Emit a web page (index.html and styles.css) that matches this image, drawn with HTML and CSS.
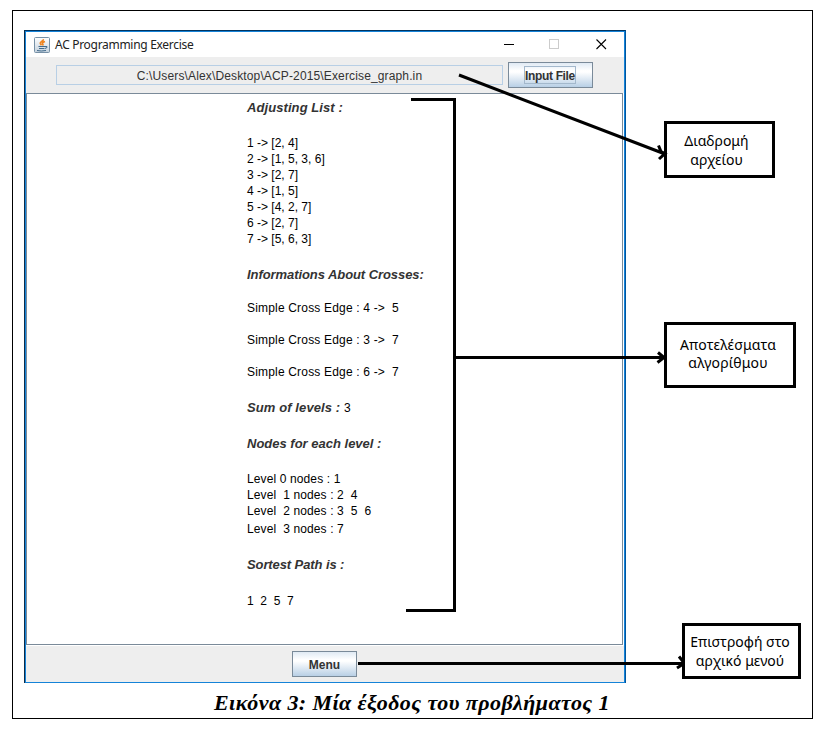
FILE: index.html
```html
<!DOCTYPE html>
<html lang="el">
<head>
<meta charset="utf-8">
<title>AC Programming Exercise</title>
<link rel="stylesheet" href="styles.css">
</head>
<body>
<figure class="figure">
  <section class="window">
    <header class="titlebar">
      <svg class="java" viewBox="0 0 16 16" width="16" height="16">
        <defs><linearGradient id="jb" x1="0" y1="0" x2="0" y2="1"><stop offset="0" stop-color="#fff"/><stop offset="1" stop-color="#c3d1dd"/></linearGradient></defs>
        <rect x=".5" y=".5" width="15" height="15" rx="1" fill="url(#jb)" stroke="#7690a6"/>
        <path d="M9.300 2.200C9.800 4.200 5.800 4.800 6.300 6.300Q6.800 7.300 7.500 8.300M11 4.500Q8 5.500 8.500 6.500Q9.500 7.500 8.500 8.500" fill="none" stroke="#ee8420" stroke-width="1.700"/>
        <path d="M4.500 9.500H11M5 11.500H10.500M3 13.500Q7 14.500 12 13.500M11 9.500Q14 9 13 10.500L11 11.500" fill="none" stroke="#426b8c"/>
      </svg>
      <span class="title">AC Programming Exercise</span>
      <svg class="controls" width="103" height="11" viewBox="0 0 103 11">
        <path d="M0 5.500H10" stroke="#000"/>
        <rect x="45.500" y=".5" width="9" height="9" fill="none" stroke="#ccc"/>
        <path d="M92.500 .5l9.500 9.500M102 .5l-9.500 9.500" stroke="#000" stroke-width="1.100"/>
      </svg>
    </header>
    <div class="toolbar">
      <div class="path"><span>C:\Users\Alex\Desktop\ACP-2015\Exercise_graph.in</span></div>
      <button class="btn input"><span>Input File</span></button>
    </div>
    <main class="output">
      <h2 class="adj">Adjusting List :</h2>
      <div class="block list">
        <p>1 -&gt; [2, 4]</p><p>2 -&gt; [1, 5, 3, 6]</p><p>3 -&gt; [2, 7]</p><p>4 -&gt; [1, 5]</p><p>5 -&gt; [4, 2, 7]</p><p>6 -&gt; [2, 7]</p><p>7 -&gt; [5, 6, 3]</p>
      </div>
      <h2 class="info">Informations About Crosses:</h2>
      <div class="block crosses">
        <p>Simple Cross Edge : 4 -&gt;  5</p><p>Simple Cross Edge : 3 -&gt;  7</p><p>Simple Cross Edge : 6 -&gt;  7</p>
      </div>
      <h2 class="sum">Sum of levels : <span>3</span></h2>
      <h2 class="nodes">Nodes for each level :</h2>
      <div class="block levels">
        <p>Level 0 nodes : 1</p><p>Level  1 nodes : 2  4</p><p>Level  2 nodes : 3  5  6</p><p class="last">Level  3 nodes : 7</p>
      </div>
      <h2 class="sort">Sortest Path is :</h2>
      <div class="block"><p>1  2  5  7</p></div>
    </main>
    <footer class="bottom"><button class="btn menu">Menu</button></footer>
  </section>
  <figcaption><span>Εικόνα 3: Μία έξοδος του προβλήματος 1</span></figcaption>
</figure>
<svg class="arrows" width="825" height="729" viewBox="0 0 825 729" fill="none" stroke="#000" stroke-width="3">
  <path d="M459 75L665 154M658.500 145.500L661 151.500L665 153.500L659 159"/>
  <path d="M411 99.500H454.500V610.500H406M455 357.500H665M658 352.500L664 357.500L657.500 362.500"/>
  <path d="M358 663.500H684M679 656.500L683 661.500M677 668L684 663.500"/>
</svg>
<div class="callout c1"><span>Διαδρομή</span><span>αρχείου</span></div>
<div class="callout c2"><span>Αποτελέσματα</span><span>αλγορίθμου</span></div>
<div class="callout c3"><span>Επιστροφή στο</span><span>αρχικό μενού</span></div>
</body>
</html>
```
FILE: styles.css
```css
* { box-sizing: border-box; }
body { margin: 0; height: 729px; overflow: hidden; background: #fff; padding: 10px 12px; font-family: "Liberation Sans", sans-serif; }
.figure { margin: 0; width: 801px; height: 709px; border: 1px solid #000; padding: 19px 11px 0; }
.window { width: 602px; height: 653px; border: solid; border-width: 1px 1px 0; border-color: #00335f #00569f #1583d8 #0b2b49; display: flex; flex-direction: column; box-shadow: inset 1px 1px #1583d8, inset -1px 0 #1583d8; padding: 1px 1px 0; }
.window > * { flex: none; }
.titlebar { height: 25px; display: flex; align-items: center; padding: 0 17px 0 8px; }
.java { flex: none; }
.title { margin-left: 5px; font: 12px/16px "Noto Sans", sans-serif; color: #222; letter-spacing: -0.3px; white-space: nowrap; }
.controls { margin-left: auto; }
.toolbar { height: 36px; background: #eee; display: flex; align-items: flex-start; padding: 5px 30px 0; }
.path { width: 447px; height: 20px; margin-top: 3px; border: 1px solid #b8cfe5; text-align: center; font-size: 12px; line-height: 20px; color: #333; letter-spacing: .14px; }
.btn { height: 26px; border: 1px solid #7a8a99; padding: 0; font: bold 12px/18px "Liberation Sans", sans-serif; color: #333; background: linear-gradient(#e0eaf4, #fff 32%, #fff 38%, #b8cfe5); display: flex; justify-content: center; align-items: center; white-space: nowrap; }
.input { width: 85px; margin-left: 5px; padding-right: 1px; }
.input span { height: 18px; border: 1px solid #a3b8cc; width: 52px; line-height: 18px; display: flex; justify-content: center; letter-spacing: -.35px; }
.menu { width: 65px; padding-top: 1px; }
.output { width: 597px; height: 552px; border: 1px solid #7a8a99; padding: 6px 0 0 220px; font-size: 12px; line-height: 16px; color: #000; }
.output p, .output h2 { margin: 0; height: 16px; white-space: pre; }
.output h2 { font: italic bold 13px/16px "Liberation Sans", sans-serif; color: #333; }
.output h2.adj { margin-bottom: 19px; letter-spacing: .08px; }
.output h2.info { margin: 20px 0 17px; letter-spacing: -.07px; }
.crosses { display: grid; gap: 16px; letter-spacing: .18px; }
.levels { letter-spacing: .12px; }
.output h2.sum { margin: 20px 0; letter-spacing: .1px; }
.sum span { font: 12px "Liberation Sans", sans-serif; color: #000; }
.output h2.nodes { margin-bottom: 19px; }
.output p.last { margin-top: 2px; }
.output h2.sort { margin: 20px 0; letter-spacing: -.1px; }
.bottom { height: 37px; margin-top: 1px; background: #eee; border-bottom: 1px solid #1583d8; padding: 5px 0 0 266px; }
figcaption { font: italic bold 22px/26px "Liberation Serif", serif; margin-top: 7px; white-space: nowrap; }
figcaption span { display: block; margin-left: 190px; letter-spacing: .42px; }
.arrows { position: absolute; left: 0; top: 0; }
.callout { position: absolute; border: 3px solid #000; display: flex; flex-direction: column; align-items: center; justify-content: center; font: 14px/19px "Noto Sans", sans-serif; color: #000; white-space: nowrap; }
.c1 { left: 664px; top: 121px; width: 111px; height: 57px; padding-right: 6px; }
.c2 { left: 664px; top: 322px; width: 132px; height: 66px; line-height: 18px; padding: 0 4px 2px 0; letter-spacing: .15px; }
.c3 { left: 682px; top: 623px; width: 119px; height: 56px; padding-right: 3px; }
```
